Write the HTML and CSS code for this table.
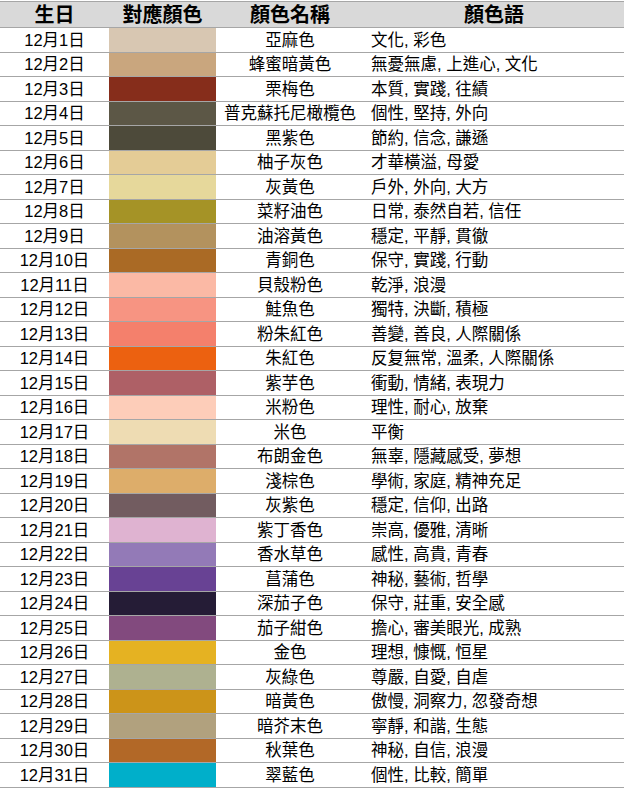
FILE: index.html
```html
<!DOCTYPE html>
<html lang="zh-Hant">
<head>
<meta charset="utf-8">
<title>12月 生日顏色</title>
<link rel="stylesheet" href="styles.css">
</head>
<body>
<div class="sheet">
  <div class="cell head">生日</div>
  <div class="cell head">對應顏色</div>
  <div class="cell head">顏色名稱</div>
  <div class="cell head">顏色語</div>

  <div class="cell date">12月1日</div><div class="cell swatch" style="background:#d8c7b2"></div><div class="cell name">亞麻色</div><div class="cell words">文化, 彩色</div>
  <div class="cell date">12月2日</div><div class="cell swatch" style="background:#c9a67e"></div><div class="cell name">蜂蜜暗黃色</div><div class="cell words">無憂無慮, 上進心, 文化</div>
  <div class="cell date">12月3日</div><div class="cell swatch" style="background:#862d1b"></div><div class="cell name">栗梅色</div><div class="cell words">本質, 實踐, 往績</div>
  <div class="cell date">12月4日</div><div class="cell swatch" style="background:#5c5746"></div><div class="cell name">普克蘇托尼橄欖色</div><div class="cell words">個性, 堅持, 外向</div>
  <div class="cell date">12月5日</div><div class="cell swatch" style="background:#4d4a3a"></div><div class="cell name">黑紫色</div><div class="cell words">節約, 信念, 謙遜</div>
  <div class="cell date">12月6日</div><div class="cell swatch" style="background:#e4cc96"></div><div class="cell name">柚子灰色</div><div class="cell words">才華橫溢, 母愛</div>
  <div class="cell date">12月7日</div><div class="cell swatch" style="background:#e6d89b"></div><div class="cell name">灰黃色</div><div class="cell words">戶外, 外向, 大方</div>
  <div class="cell date">12月8日</div><div class="cell swatch" style="background:#a59326"></div><div class="cell name">菜籽油色</div><div class="cell words">日常, 泰然自若, 信任</div>
  <div class="cell date">12月9日</div><div class="cell swatch" style="background:#b3925e"></div><div class="cell name">油溶黃色</div><div class="cell words">穩定, 平靜, 貫徹</div>
  <div class="cell date">12月10日</div><div class="cell swatch" style="background:#aa6a25"></div><div class="cell name">青銅色</div><div class="cell words">保守, 實踐, 行動</div>
  <div class="cell date">12月11日</div><div class="cell swatch" style="background:#fbb9a5"></div><div class="cell name">貝殼粉色</div><div class="cell words">乾淨, 浪漫</div>
  <div class="cell date">12月12日</div><div class="cell swatch" style="background:#f79482"></div><div class="cell name">鮭魚色</div><div class="cell words">獨特, 決斷, 積極</div>
  <div class="cell date">12月13日</div><div class="cell swatch" style="background:#f4806c"></div><div class="cell name">粉朱紅色</div><div class="cell words">善變, 善良, 人際關係</div>
  <div class="cell date">12月14日</div><div class="cell swatch" style="background:#ec6110"></div><div class="cell name">朱紅色</div><div class="cell words">反复無常, 溫柔, 人際關係</div>
  <div class="cell date">12月15日</div><div class="cell swatch" style="background:#ae6066"></div><div class="cell name">紫芋色</div><div class="cell words">衝動, 情緒, 表現力</div>
  <div class="cell date">12月16日</div><div class="cell swatch" style="background:#fdcdb9"></div><div class="cell name">米粉色</div><div class="cell words">理性, 耐心, 放棄</div>
  <div class="cell date">12月17日</div><div class="cell swatch" style="background:#eedcb3"></div><div class="cell name">米色</div><div class="cell words">平衡</div>
  <div class="cell date">12月18日</div><div class="cell swatch" style="background:#b17468"></div><div class="cell name">布朗金色</div><div class="cell words">無辜, 隱藏感受, 夢想</div>
  <div class="cell date">12月19日</div><div class="cell swatch" style="background:#ddad6a"></div><div class="cell name">淺棕色</div><div class="cell words">學術, 家庭, 精神充足</div>
  <div class="cell date">12月20日</div><div class="cell swatch" style="background:#725c60"></div><div class="cell name">灰紫色</div><div class="cell words">穩定, 信仰, 出路</div>
  <div class="cell date">12月21日</div><div class="cell swatch" style="background:#dfb3d1"></div><div class="cell name">紫丁香色</div><div class="cell words">崇高, 優雅, 清晰</div>
  <div class="cell date">12月22日</div><div class="cell swatch" style="background:#937ab7"></div><div class="cell name">香水草色</div><div class="cell words">感性, 高貴, 青春</div>
  <div class="cell date">12月23日</div><div class="cell swatch" style="background:#684294"></div><div class="cell name">菖蒲色</div><div class="cell words">神秘, 藝術, 哲學</div>
  <div class="cell date">12月24日</div><div class="cell swatch" style="background:#251c36"></div><div class="cell name">深茄子色</div><div class="cell words">保守, 莊重, 安全感</div>
  <div class="cell date">12月25日</div><div class="cell swatch" style="background:#824a7e"></div><div class="cell name">茄子紺色</div><div class="cell words">擔心, 審美眼光, 成熟</div>
  <div class="cell date">12月26日</div><div class="cell swatch" style="background:#e5b222"></div><div class="cell name">金色</div><div class="cell words">理想, 慷慨, 恒星</div>
  <div class="cell date">12月27日</div><div class="cell swatch" style="background:#aeb190"></div><div class="cell name">灰綠色</div><div class="cell words">尊嚴, 自愛, 自虐</div>
  <div class="cell date">12月28日</div><div class="cell swatch" style="background:#cc9419"></div><div class="cell name">暗黃色</div><div class="cell words">傲慢, 洞察力, 忽發奇想</div>
  <div class="cell date">12月29日</div><div class="cell swatch" style="background:#b1a17e"></div><div class="cell name">暗芥末色</div><div class="cell words">寧靜, 和諧, 生態</div>
  <div class="cell date">12月30日</div><div class="cell swatch" style="background:#b26827"></div><div class="cell name">秋葉色</div><div class="cell words">神秘, 自信, 浪漫</div>
  <div class="cell date">12月31日</div><div class="cell swatch" style="background:#00afca"></div><div class="cell name">翠藍色</div><div class="cell words">個性, 比較, 簡單</div>
</div>
</body>
</html>
```

FILE: styles.css
```css
html, body {
  margin: 0;
  padding: 0;
  background: #ffffff;
}

body {
  font-family: "Liberation Sans", "Noto Sans CJK TC", sans-serif;
  color: #000000;
}

.sheet {
  margin-top: 1px;
  width: 624px;
  display: grid;
  grid-template-columns: 109px 107px 148px 260px;
  grid-template-rows: 26px;
  grid-auto-rows: 24.5px;
  border-top: 1px solid #a6a6a6;
}

.cell {
  box-sizing: border-box;
  border-bottom: 1px solid #a6a6a6;
  display: flex;
  align-items: center;
  line-height: 1;
  font-size: 16.5px;
  white-space: nowrap;
  overflow: hidden;
}

.head {
  background: #d9d9d9;
  font-size: 20px;
  font-weight: bold;
  justify-content: center;
}

.date {
  justify-content: center;
}

.name {
  justify-content: center;
}

.words {
  padding-left: 7px;
}
```
